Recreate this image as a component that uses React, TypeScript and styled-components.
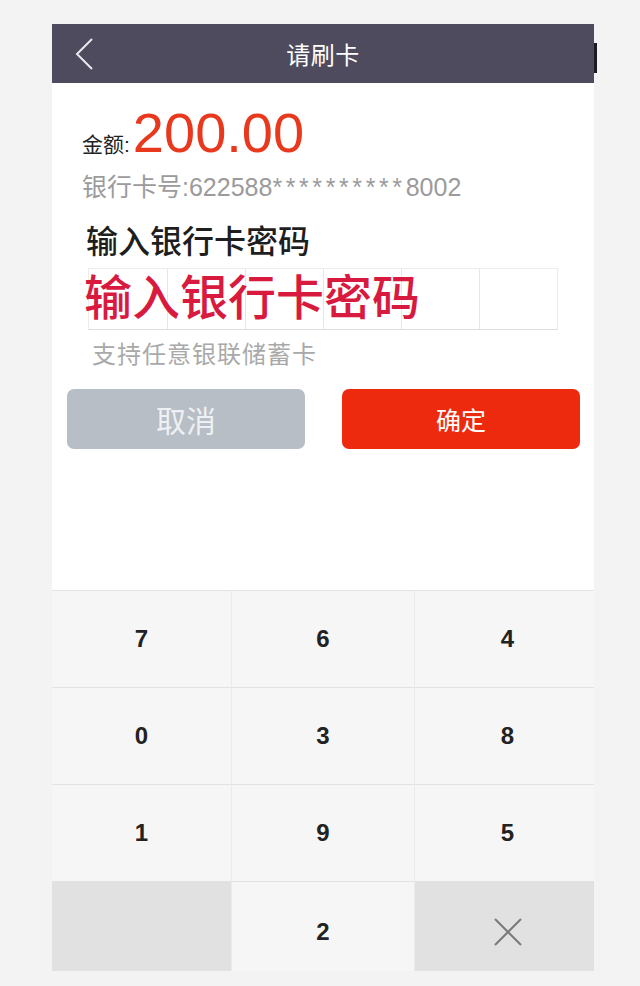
import React from "react";
import styled, { createGlobalStyle } from "styled-components";

const GlobalStyle = createGlobalStyle`
  body {
    margin: 0;
    background: #f3f3f3;
    font-family: "Liberation Sans", "Noto Sans CJK SC", sans-serif;
  }
`

const Screen = styled.div`
  width: 542px;
  margin-left: 52px;
  padding-top: 24px;
`

const Header = styled.div`
  height: 59px;
  background: #4f4b5e;
  display: grid;
  grid-template-columns: 1fr auto 1fr;
  align-items: center;
  position: relative;

  &::after {
    content: "";
    position: absolute;
    right: -3px;
    top: 19px;
    width: 3px;
    height: 30px;
    background: #1c1b22;
  }
`

const Back = styled.div`
  padding-left: 23px;
  display: flex;
  align-items: center;
`

const Title = styled.div`
  color: #ffffff;
  font-size: 24px;
  letter-spacing: 0.5px;
`

const Content = styled.div`
  background: #ffffff;
  height: 507px;
  box-sizing: border-box;
  padding-top: 23px;
  display: flex;
  flex-direction: column;
`

const AmountRow = styled.div`
  padding-left: 30px;
  display: flex;
  align-items: baseline;
  height: 54px;
`

const AmountLabel = styled.span`
  font-size: 21px;
  color: #222;
  margin-right: 3px;
`

const Amount = styled.span`
  font-size: 56px;
  line-height: 54px;
  color: #e8391f;
`

const CardNo = styled.div`
  margin-top: 12px;
  padding-left: 30px;
  font-size: 25px;
  line-height: 30px;
  color: #9b9b9b;
`

const Stars = styled.span`
  letter-spacing: 3.6px;
`

const Heading = styled.div`
  margin-top: 22px;
  padding-left: 34px;
  font-size: 32px;
  line-height: 37px;
  font-weight: 500;
  color: #1e1e1e;
`

const PinBox = styled.div`
  position: relative;
  margin: 7px 0 0 36px;
  width: 470px;
  height: 62px;
  box-sizing: border-box;
  display: grid;
  grid-template-columns: repeat(6, 1fr);
  border: 1px solid #ececec;
  border-bottom-color: #dedede;
`

const PinCell = styled.div<{ $first?: boolean }>`
  border-left: ${(p) => (p.$first ? "none" : "1px solid #e6e6e6")};
`

const Overlay = styled.div`
  position: absolute;
  left: -5px;
  top: 6px;
  font-size: 48px;
  line-height: 48px;
  font-weight: 500;
  color: #d81a3f;
  white-space: nowrap;
`

const Hint = styled.div`
  margin-top: 10px;
  padding-left: 40px;
  font-size: 24px;
  line-height: 30px;
  letter-spacing: 1px;
  color: #a9a9a9;
`

const Buttons = styled.div`
  margin-top: 19px;
  padding: 0 14px 0 15px;
  display: grid;
  grid-template-columns: 1fr 1fr;
  gap: 37px;
  height: 60px;
`

const Button = styled.button<{ $primary?: boolean }>`
  border: none;
  border-radius: 7px;
  font-family: inherit;
  background: ${(p) => (p.$primary ? "#ee2a0e" : "#b8bec5")};
  color: ${(p) => (p.$primary ? "#ffffff" : "#eef0f3")};
  font-size: ${(p) => (p.$primary ? "25px" : "30px")};
`

const Keypad = styled.div`
  display: grid;
  grid-template-columns: 180px 183px 179px;
  grid-template-rows: 97px 97px 97px 89px;
  border-top: 1px solid #e3e3e3;
`

const Key = styled.div<{ $dark?: boolean; $last?: boolean; $edge?: boolean }>`
  background: ${(p) => (p.$dark ? "#e1e1e1" : "#f6f6f6")};
  border-right: ${(p) => (p.$edge ? "none" : "1px solid #ebebeb")};
  border-bottom: ${(p) => (p.$last ? "none" : "1px solid #e2e2e2")};
  box-sizing: border-box;
  display: flex;
  align-items: center;
  justify-content: center;
  padding-top: ${(p) => (p.$last ? "10px" : "0")};
  padding-left: ${(p) => (p.$edge ? "6px" : "0")};
  font-family: "Liberation Sans", sans-serif;
  font-weight: 700;
  font-size: 24px;
  color: #222;
`

const rows = [
  ["7", "6", "4"],
  ["0", "3", "8"],
  ["1", "9", "5"],
]

export default function App() {
  return (
    <>
      <GlobalStyle />
      <Screen>
        <Header>
          <Back>
            <svg width="19" height="32" viewBox="0 0 19 32">
              <polyline points="17,1 2,16 17,31" fill="none" stroke="#e8e8ee" strokeWidth="2" />
            </svg>
          </Back>
          <Title>请刷卡</Title>
          <div />
        </Header>

        <Content>
          <AmountRow>
            <AmountLabel>金额:</AmountLabel>
            <Amount>200.00</Amount>
          </AmountRow>
          <CardNo>
            银行卡号:622588<Stars>**********</Stars>8002
          </CardNo>
          <Heading>输入银行卡密码</Heading>
          <PinBox>
            {[0, 1, 2, 3, 4, 5].map((i) => (
              <PinCell key={i} $first={i === 0} />
            ))}
            <Overlay>输入银行卡密码</Overlay>
          </PinBox>
          <Hint>支持任意银联储蓄卡</Hint>
          <Buttons>
            <Button>取消</Button>
            <Button $primary>确定</Button>
          </Buttons>
        </Content>

        <Keypad>
          {rows.map((row) =>
            row.map((d, i) => (
              <Key key={d} $edge={i === 2}>
                {d}
              </Key>
            ))
          )}
          <Key $dark $last />
          <Key $last>2</Key>
          <Key $dark $last $edge>
            <svg width="30" height="30" viewBox="0 0 30 30">
              <path d="M2 2 L28 28 M28 2 L2 28" stroke="#7a7a7a" strokeWidth="2" fill="none" />
            </svg>
          </Key>
        </Keypad>
      </Screen>
    </>
  )
}
